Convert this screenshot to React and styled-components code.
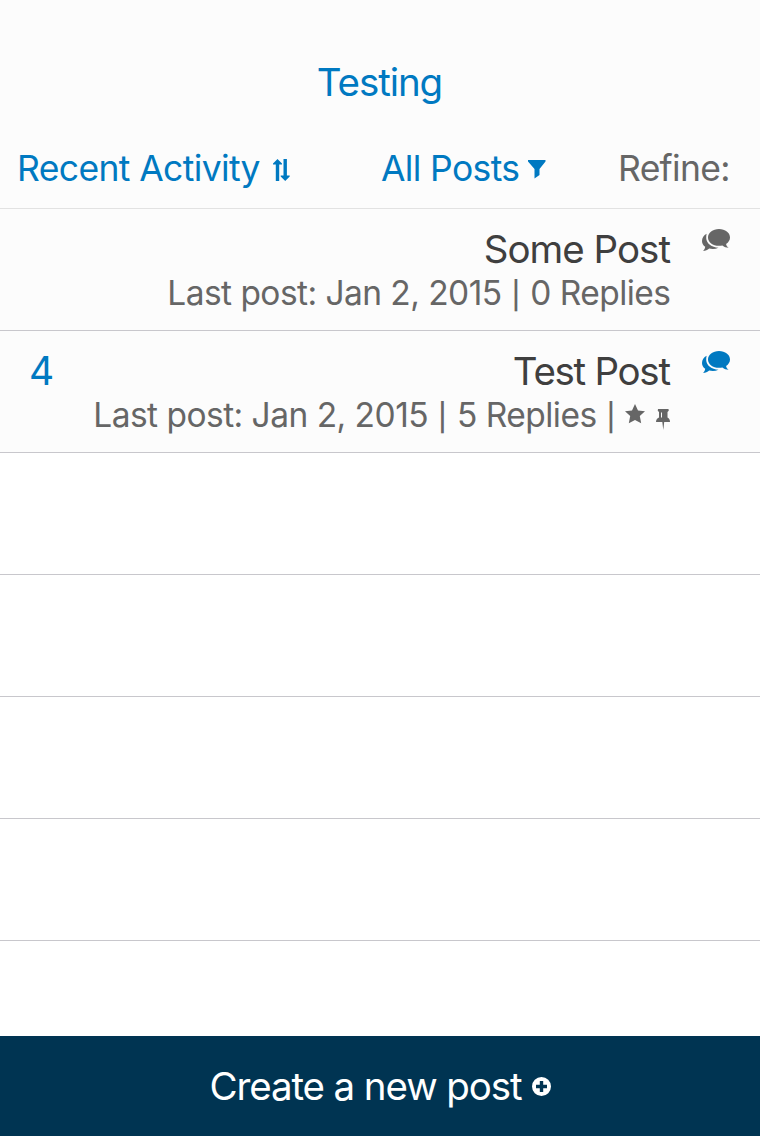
import React from 'react';
import styled, { createGlobalStyle } from 'styled-components';

const Global = createGlobalStyle`
  * { box-sizing: border-box; }
  body { margin: 0; font-family: Inter, sans-serif; background: #fff; }
`;
const Screen = styled.main`
  width: 760px; height: 1136px; display: flex; flex-direction: column; overflow: hidden;
`;
const Header = styled.header`
  height: 209px; background: #fcfcfc; border-bottom: 1px solid #e2e2e2;
  display: flex; flex-direction: column; flex: none;
`;
const Title = styled.h1`
  margin: 0; padding-top: 57px; height: 137px; text-align: center; color: #0079c1;
  line-height: 50px; font-weight: 400;
`;
const Toolbar = styled.div`
  display: grid; grid-template-columns: 364px 237px 1fr; padding-left: 17px; height: 62px;
`;
const Filter = styled.div`
  display: flex; align-items: center; white-space: nowrap;
  color: ${p => (p.$muted ? '#666' : '#0079c1')};
`;
const Label = styled.span`
  font-size: ${p => p.$size}px;
  letter-spacing: ${p => p.$track || 0}px;
  margin-right: ${p => -(p.$track || 0)}px;
  white-space: pre;
`;
const Bar = styled.span`
  display: inline-block; width: 11px; text-align: center; font-size: 27px; font-weight: 500; letter-spacing: 0; line-height: 1;
`;
const List = styled.section` flex: 1; overflow: hidden; `;
const Row = styled.article`
  height: 122px; border-bottom: 1px solid #c8c7cc; background: ${p => (p.$filled ? '#fcfcfc' : '#fff')};
  display: flex; padding: 17px 30px 0;
`;
const Count = styled.div` color: #0079c1; font-size: 39px; line-height: 46px; width: 50px; margin-left: -1px; `;
const Post = styled.div` flex: 1; display: flex; flex-direction: column; align-items: flex-end; `;
const Heading = styled.div` color: #3f3f3f; height: 46px; line-height: 46px; `;
const Meta = styled.div` color: #666; height: 42px; line-height: 42px; display: flex; white-space: nowrap; `;
const Bubble = styled.div`
  width: 59px; display: flex; justify-content: flex-end; padding-top: 3px;
  color: ${p => (p.$unread ? '#0079c1' : '#666')};
`;
const Footer = styled.footer`
  height: 100px; background: #003452; color: #fff; display: flex; align-items: center; justify-content: center; flex: none;
`;
const Icon = styled.svg`
  display: block; flex: none; fill: currentColor;
  margin-left: ${p => p.$gap || 0}px; margin-top: ${p => p.$drop || 0}px;
`;

const Chat = () => (
  <Icon width="28" height="23" viewBox="0 0 28 23">
    <path d="M17 0c6.200 0 11 3.600 11 8.500 0 2.600-1.500 4.900-3.900 6.400.3 1.800 1.200 2.800 2.500 3.800-2.400 0-4.400-.7-6.200-2.200-1 .2-2.200.3-3.400.3-6.200 0-11-3.600-11-8.300S10.800 0 17 0z" />
    <path d="M4.600 4.800C1.800 6.200 0 9 0 11.900c0 2.300 1.200 4.400 3.200 5.900-.2 1.700-.9 3-2.100 4.100 2.400 0 4.400-.9 6.100-2.300 3.100.7 6.500.5 9.300-.8C9.700 18.400 4.400 14.500 4.200 9c0-1.400.1-2.800.4-4.200z" />
  </Icon>
);

export default function App() {
  return (
    <Screen>
      <Global />
      <Header>
        <Title><Label $size={38.5} $track={-1.08}>Testing</Label></Title>
        <Toolbar>
          <Filter><Label $size={35.5} $track={-0.63}>Recent Activity</Label>
            <Icon $gap={12.500} $drop={3} width="17" height="24" viewBox="0 0 17 24"><path d="M0 5.500l4.500-4.500L9 5.500v1H6.200V23H2.800V6.500H0zM10.500 1h3.400v16.500h2.800v1L12.200 23l-4.500-4.500v-1h2.800z" /></Icon>
          </Filter>
          <Filter><Label $size={35.5} $track={-0.65}>All Posts</Label>
            <Icon $gap={8.500} $drop={3} width="18" height="19" viewBox="0 0 18 19"><path d="M0 0h17.500v1.500L11.500 9v6L6.500 18.500V9L0 1.500z" /></Icon>
          </Filter>
          <Filter $muted><Label $size={35.5} $track={-0.7}>Refine:</Label></Filter>
        </Toolbar>
      </Header>
      <List>
        <Row $filled>
          <Count />
          <Post>
            <Heading><Label $size={38.5} $track={-1}>Some Post</Label></Heading>
            <Meta><Label $size={33.5} $track={-0.55}>Last post: Jan 2, 2015 <Bar>|</Bar> 0 Replies</Label></Meta>
          </Post>
          <Bubble><Chat /></Bubble>
        </Row>
        <Row $filled>
          <Count>4</Count>
          <Post>
            <Heading><Label $size={38.5} $track={-1.28}>Test Post</Label></Heading>
            <Meta><Label $size={33.5} $track={-0.52}>Last post: Jan 2, 2015 <Bar>|</Bar> 5 Replies <Bar>|</Bar></Label>
              <Icon $gap={8} $drop={10} width="20" height="20" viewBox="0 0 20 20"><path d="M10 0l3 6.500 7 .8-5.200 4.800L16.200 19.300 10 16 3.800 19.300l1.400-7.200L0 7.300l7-.8z" /></Icon>
              <Icon $gap={11} $drop={14.500} width="15" height="21" viewBox="0 0 15 21"><path fillRule="evenodd" d="M2 0h10.500Q13.500 2 11.500 3v5.500q2.500 1 2.500 4.500H8.200l-.9 8-1-8H0Q0 9.500 3 8.500V3Q1 2 2 0zM5 3.500v5h1v-5z" /></Icon>
            </Meta>
          </Post>
          <Bubble $unread><Chat /></Bubble>
        </Row>
        <Row /><Row /><Row /><Row /><Row />
      </List>
      <Footer><Label $size={38.5} $track={-1.1}>Create a new post</Label>
        <Icon $gap={9} $drop={1} width="19" height="19" viewBox="0 0 19 19"><path fillRule="evenodd" d="M9.500 0a9.500 9.500 0 1 0 0 19 9.500 9.500 0 0 0 0-19zM7.800 4h3.400v3.800H15v3.400h-3.800V15H7.800v-3.800H4V7.800h3.800z" /></Icon>
      </Footer>
    </Screen>
  );
}
